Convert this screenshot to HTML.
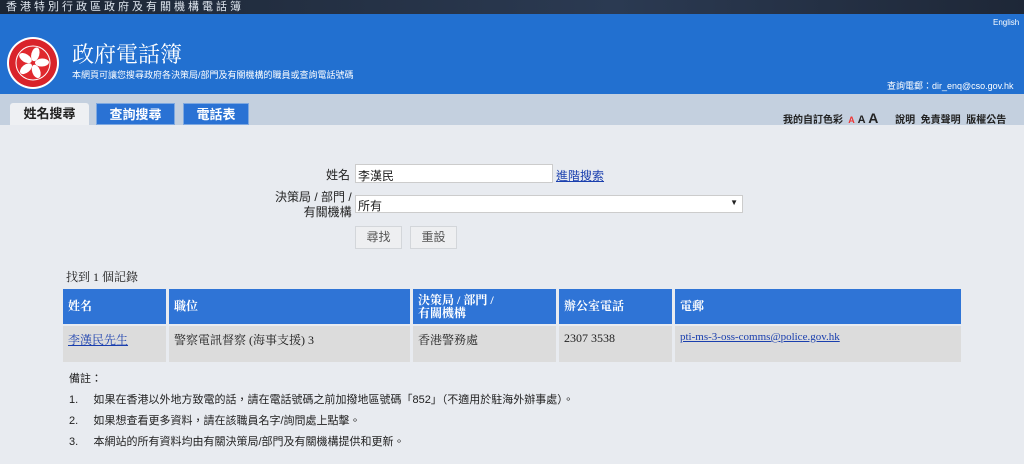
<!DOCTYPE html>
<html><head><meta charset="utf-8"><style>
*{margin:0;padding:0;box-sizing:border-box}
body{width:1024px;height:464px;background:#e8ebf0;font-family:"Liberation Sans","Noto Sans CJK TC",sans-serif;position:relative;overflow:hidden;color:#222}
.a{position:absolute;white-space:nowrap}
.serif{font-family:"Liberation Serif","Noto Serif CJK SC",serif}
.top{left:0;top:0;width:1024px;height:14px;background:linear-gradient(90deg,#1c2533,#2b3a52 60%,#1e2737);color:#dfe6ef;font-size:11px;letter-spacing:3px;line-height:14px;padding-left:6px}
.ban{left:0;top:14px;width:1024px;height:80px;background:#2270d0}
.tabs{left:0;top:94px;width:1024px;height:31px;background:#c4d0df}
.tab{position:absolute;top:103px;height:22px;font-size:13px;font-weight:bold;text-align:center;line-height:22px}
td,th{font-size:12px;text-align:left;padding:0 5px}
th{background:#2f74d6;color:#fff;height:35px;font-weight:bold;line-height:13px;vertical-align:middle}
td{background:#dcdcdc;height:36px;padding-top:5px;vertical-align:top}
table{border-spacing:3px 2px;position:absolute;left:60px;top:287px;width:904px;table-layout:fixed}
a{color:#1a3fae}
.btn{position:absolute;top:226px;height:23px;width:47px;background:#eeeff1;border:1px solid #d3d6da;font-size:12px;color:#555;text-align:center;line-height:21px}
</style></head><body>
<div class="a top">香港特別行政區政府及有關機構電話簿</div>
<div class="a ban"></div>
<svg class="a" style="left:7px;top:37px" width="52" height="52" viewBox="0 0 52 52"><circle cx="26" cy="26" r="26" fill="#fff"/><circle cx="26" cy="26" r="24" fill="#d9232a"/><circle cx="26" cy="26" r="17" fill="#e0282e" stroke="#fff" stroke-width="1"/><g fill="#fff"><ellipse cx="26" cy="17" rx="4" ry="7" transform="rotate(15 26 26)"/><ellipse cx="26" cy="17" rx="4" ry="7" transform="rotate(87 26 26)"/><ellipse cx="26" cy="17" rx="4" ry="7" transform="rotate(159 26 26)"/><ellipse cx="26" cy="17" rx="4" ry="7" transform="rotate(231 26 26)"/><ellipse cx="26" cy="17" rx="4" ry="7" transform="rotate(303 26 26)"/></g></svg>
<div class="a serif" style="left:72px;top:38px;font-size:22px;color:#fff">政府電話簿</div>
<div class="a" style="left:72px;top:68px;font-size:9px;color:#fff">本網頁可讓您搜尋政府各決策局/部門及有關機構的職員或查詢電話號碼</div>
<div class="a" style="left:993px;top:18px;font-size:8px;color:#fff">English</div>
<div class="a" style="left:887px;top:79px;font-size:9px;color:#fff">查詢電郵：dir_enq@cso.gov.hk</div>
<div class="a tabs"></div>
<div class="tab" style="left:10px;width:79px;background:#eef0f3;color:#222;border-radius:3px 3px 0 0">姓名搜尋</div>
<div class="tab" style="left:96px;width:79px;background:#2a72d4;color:#fff;border:1px solid #7ea8e0">查詢搜尋</div>
<div class="tab" style="left:183px;width:66px;background:#2a72d4;color:#fff;border:1px solid #7ea8e0">電話表</div>
<div class="a" style="left:783px;top:110px;font-size:10px;font-weight:bold">我的自訂色彩 <span style="color:#e33;font-size:9px">&nbsp;A</span> <span style="font-size:11px">A</span> <span style="font-size:14px">A</span> &nbsp;&nbsp;&nbsp;&nbsp; 說明 &nbsp;免責聲明 &nbsp;版權公告</div>
<div class="a" style="left:326px;top:166px;font-size:12px">姓名</div>
<div class="a" style="left:355px;top:164px;width:198px;height:19px;background:#fff;border:1px solid #ccc;font-size:12px;padding:2px 2px">李漢民</div>
<div class="a" style="left:556px;top:167px;font-size:12px"><a href="#">進階搜索</a></div>
<div class="a" style="left:275px;top:190px;font-size:12px;text-align:right;line-height:15px">決策局 / 部門 /<br>&nbsp;&nbsp;&nbsp;&nbsp;&nbsp;&nbsp;有關機構</div>
<div class="a" style="left:355px;top:195px;width:388px;height:18px;background:#fff;border:1px solid #ccc;font-size:12px;padding:1px 2px">所有<span style="position:absolute;right:4px;top:2px;font-size:8px">▼</span></div>
<div class="btn" style="left:355px">尋找</div>
<div class="btn" style="left:410px">重設</div>
<div class="a serif" style="left:66px;top:268px;font-size:12px">找到 1 個記錄</div>
<table class="serif"><colgroup><col style="width:103px"><col style="width:241px"><col style="width:143px"><col style="width:113px"><col></colgroup><tr><th>姓名</th><th>職位</th><th>決策局 / 部門 /<br>有關機構</th><th>辦公室電話</th><th>電郵</th></tr>
<tr><td><a href="#">李漢民先生</a></td><td>警察電訊督察 (海事支援) 3</td><td>香港警務處</td><td>2307 3538</td><td style="font-size:11px"><a href="#">pti-ms-3-oss-comms@police.gov.hk</a></td></tr></table>
<div class="a" style="left:69px;top:370px;font-size:11px">備註：</div>
<div class="a" style="left:69px;top:391px;font-size:11px">1.&nbsp;&nbsp;&nbsp;&nbsp;&nbsp;如果在香港以外地方致電的話，請在電話號碼之前加撥地區號碼「852」（不適用於駐海外辦事處）。</div>
<div class="a" style="left:69px;top:412px;font-size:11px">2.&nbsp;&nbsp;&nbsp;&nbsp;&nbsp;如果想查看更多資料，請在該職員名字/詢問處上點擊。</div>
<div class="a" style="left:69px;top:433px;font-size:11px">3.&nbsp;&nbsp;&nbsp;&nbsp;&nbsp;本網站的所有資料均由有關決策局/部門及有關機構提供和更新。</div>
</body></html>
